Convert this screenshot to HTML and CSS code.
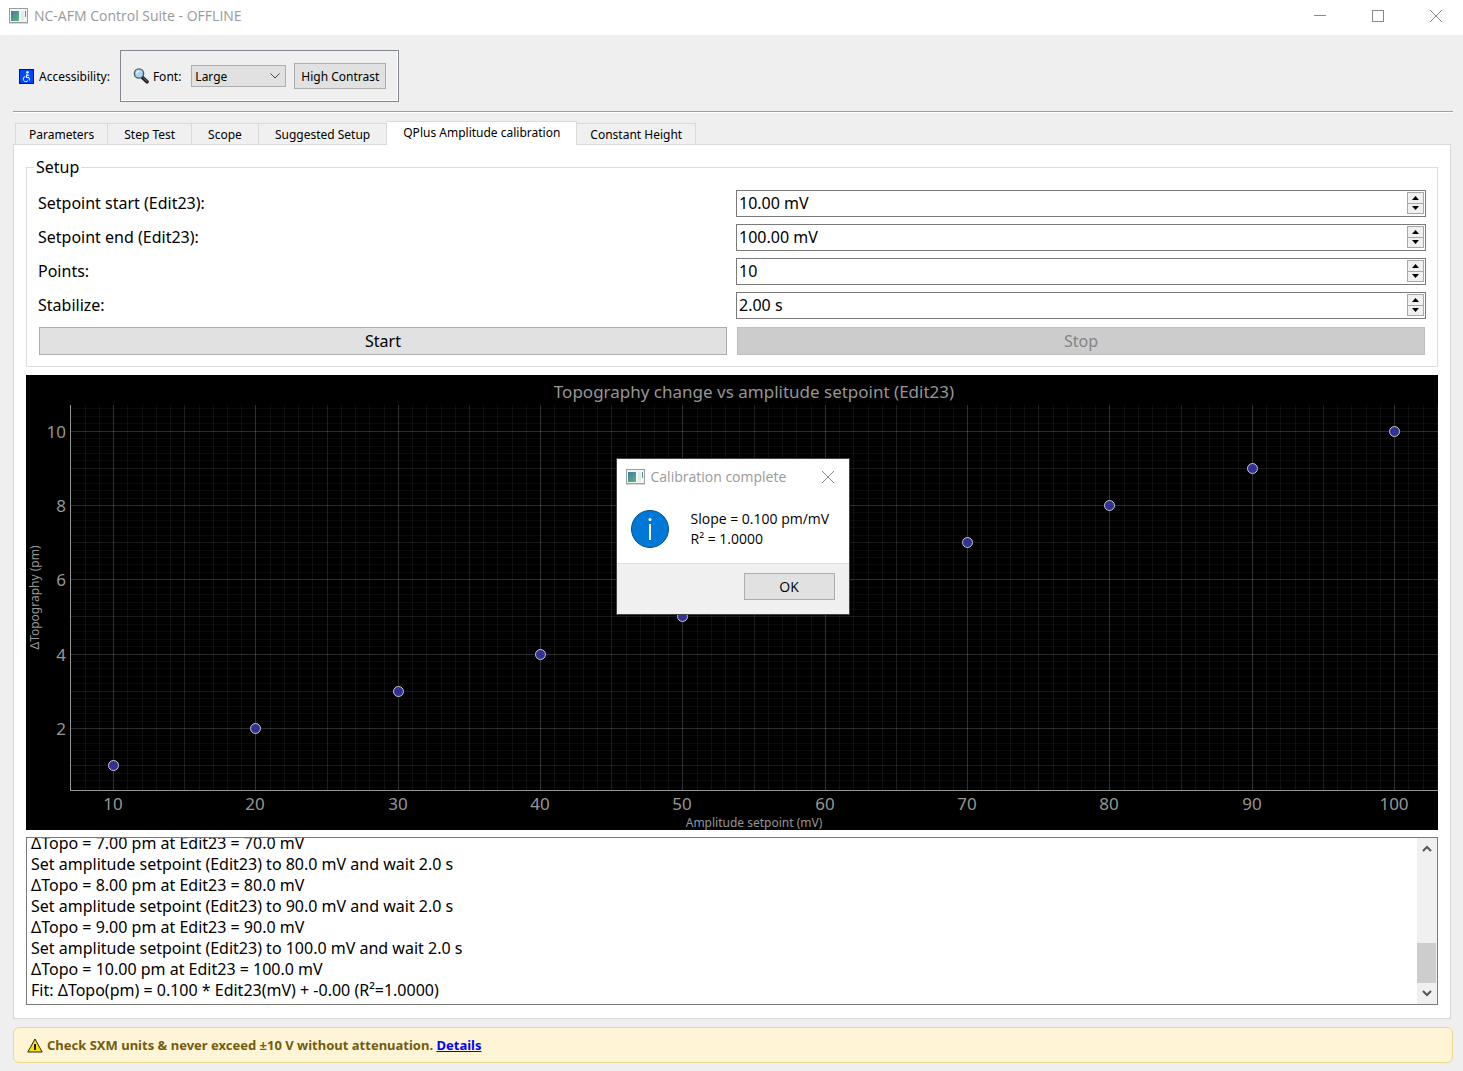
FILE: index.html
```html
<!DOCTYPE html>
<html lang="en">
<head>
<meta charset="utf-8">
<title>NC-AFM Control Suite - OFFLINE</title>
<link rel="stylesheet" href="styles.css">
</head>
<body>
<svg class="defs" aria-hidden="true">
  <defs>
    <linearGradient id="app-screen" x1="0" y1="0" x2="1" y2="1"><stop offset="0" stop-color="#4a78a0"/><stop offset="1" stop-color="#5cb487"/></linearGradient>
    <symbol id="app-icon" viewBox="0 0 19 16">
      <rect x="0.500" y="0.500" width="18" height="14" fill="#f4f6f6" stroke="#9a9fa2"/>
      <rect x="0" y="15" width="19" height="1" fill="#d8d8d8"/>
      <rect x="2" y="3" width="8" height="10" fill="url(#app-screen)"/>
      <rect x="12" y="3" width="3" height="10" fill="#e6eaeb"/>
      <rect x="16" y="3" width="1" height="6" fill="#4d9a8c"/>
    </symbol>
    <symbol id="close-icon" viewBox="0 0 14 14"><path d="M1 1 13 13M13 1 1 13" fill="none" stroke="#8a8a8a"/></symbol>
  </defs>
</svg>

<header class="titlebar">
  <svg class="app-icon" aria-hidden="true"><use href="#app-icon"/></svg>
  <h1 class="title">NC-AFM Control Suite - OFFLINE</h1>
  <div class="window-controls">
    <button class="window-button" type="button" aria-label="Minimize"><svg width="14" height="14"><path d="M1 6.500H13" stroke="#8a8a8a"/></svg></button>
    <button class="window-button" type="button" aria-label="Maximize"><svg width="14" height="14"><rect x="1.500" y="1.500" width="11" height="11" fill="none" stroke="#8a8a8a"/></svg></button>
    <button class="window-button" type="button" aria-label="Close"><svg width="14" height="14"><use href="#close-icon"/></svg></button>
  </div>
</header>

<main class="client">
  <div class="toolbar">
    <svg class="access-icon" viewBox="0 0 15 15" aria-hidden="true">
      <rect x="0.500" y="0.500" width="14" height="14" fill="#0046ff" stroke="#001a66"/>
      <circle cx="8.500" cy="3.200" r="1.200" fill="#fff"/>
      <path d="M8 4.500 7.300 8.500H10L10.500 11.500M7.800 6.300H10.300M6.300 7.500A2.600 2.600 0 1 0 9 11.500" fill="none" stroke="#fff"/>
    </svg>
    <span class="access-label">Accessibility:</span>
    <div class="access-frame">
      <svg class="lens-icon" viewBox="0 0 16 16" aria-hidden="true">
        <path d="M9.500 9.500 14 13.700" stroke="#111" stroke-width="3.600" stroke-linecap="round"/>
        <path d="M10.500 10 14 13.300" stroke="#555" stroke-width="1.600" stroke-linecap="round"/>
        <circle cx="6" cy="5.500" r="4.600" fill="#a9d5f0" stroke="#4c5964" stroke-width="1.400"/>
        <path d="M3.500 5.500Q4 3 6.500 2.800" fill="none" stroke="#e8f6ff" stroke-width="1.200"/>
      </svg>
      <label class="font-label" for="font-size">Font:</label>
      <span class="select-wrap">
        <select id="font-size" class="select"><option>Small</option><option>Medium</option><option selected>Large</option></select>
        <svg class="select-arrow" width="10" height="6" aria-hidden="true"><path d="M0.500 0.500 5 5 9.500 0.500" fill="none" stroke="#444"/></svg>
      </span>
      <button class="push-button contrast-button" type="button">High Contrast</button>
    </div>
  </div>

  <nav class="tabs" role="tablist">
    <button class="tab" role="tab" type="button">Parameters</button>
    <button class="tab" role="tab" type="button">Step Test</button>
    <button class="tab" role="tab" type="button">Scope</button>
    <button class="tab" role="tab" type="button">Suggested Setup</button>
    <button class="tab tab-active" role="tab" type="button" aria-selected="true">QPlus Amplitude calibration</button>
    <button class="tab" role="tab" type="button">Constant Height</button>
  </nav>

  <section class="pane">
    <fieldset class="setup">
      <legend class="setup-title">Setup</legend>
      <div class="form">
        <label class="form-label" for="start-value">Setpoint start (Edit23):</label>
        <div class="spin"><input class="spin-input" id="start-value" value="10.00 mV"><span class="spin-buttons"><button class="spin-button" type="button" aria-label="Increase"><svg width="7" height="4"><path d="M0 4 3.500 0 7 4Z"/></svg></button><button class="spin-button" type="button" aria-label="Decrease"><svg width="7" height="4"><path d="M0 0H7L3.500 4Z"/></svg></button></span></div>
        <label class="form-label" for="end-value">Setpoint end (Edit23):</label>
        <div class="spin"><input class="spin-input" id="end-value" value="100.00 mV"><span class="spin-buttons"><button class="spin-button" type="button" aria-label="Increase"><svg width="7" height="4"><path d="M0 4 3.500 0 7 4Z"/></svg></button><button class="spin-button" type="button" aria-label="Decrease"><svg width="7" height="4"><path d="M0 0H7L3.500 4Z"/></svg></button></span></div>
        <label class="form-label" for="points-value">Points:</label>
        <div class="spin"><input class="spin-input" id="points-value" value="10"><span class="spin-buttons"><button class="spin-button" type="button" aria-label="Increase"><svg width="7" height="4"><path d="M0 4 3.500 0 7 4Z"/></svg></button><button class="spin-button" type="button" aria-label="Decrease"><svg width="7" height="4"><path d="M0 0H7L3.500 4Z"/></svg></button></span></div>
        <label class="form-label" for="stabilize-value">Stabilize:</label>
        <div class="spin"><input class="spin-input" id="stabilize-value" value="2.00 s"><span class="spin-buttons"><button class="spin-button" type="button" aria-label="Increase"><svg width="7" height="4"><path d="M0 4 3.500 0 7 4Z"/></svg></button><button class="spin-button" type="button" aria-label="Decrease"><svg width="7" height="4"><path d="M0 0H7L3.500 4Z"/></svg></button></span></div>
        <button class="push-button run-button" type="button">Start</button>
        <button class="push-button run-button" type="button" disabled>Stop</button>
      </div>
    </fieldset>

    <figure class="chart">
      <svg class="plot" id="plot" role="img" aria-label="Topography change vs amplitude setpoint"></svg>
    </figure>

    <div class="log">
      <div class="log-text" role="log">
        <p class="log-line">ΔTopo = 7.00 pm at Edit23 = 70.0 mV</p>
        <p class="log-line">Set amplitude setpoint (Edit23) to 80.0 mV and wait 2.0 s</p>
        <p class="log-line">ΔTopo = 8.00 pm at Edit23 = 80.0 mV</p>
        <p class="log-line">Set amplitude setpoint (Edit23) to 90.0 mV and wait 2.0 s</p>
        <p class="log-line">ΔTopo = 9.00 pm at Edit23 = 90.0 mV</p>
        <p class="log-line">Set amplitude setpoint (Edit23) to 100.0 mV and wait 2.0 s</p>
        <p class="log-line">ΔTopo = 10.00 pm at Edit23 = 100.0 mV</p>
        <p class="log-line">Fit: ΔTopo(pm) = 0.100 * Edit23(mV) + -0.00 (R²=1.0000)</p>
      </div>
      <div class="scrollbar">
        <button class="scroll-button" type="button" aria-label="Scroll up"><svg width="10" height="7"><path d="M1 6 5 2 9 6" fill="none" stroke="#555" stroke-width="2"/></svg></button>
        <div class="scroll-track"><div class="scroll-thumb"></div></div>
        <button class="scroll-button" type="button" aria-label="Scroll down"><svg width="10" height="7"><path d="M1 1 5 5 9 1" fill="none" stroke="#555" stroke-width="2"/></svg></button>
      </div>
    </div>
  </section>

  <footer class="warning">
    <svg class="warning-icon" viewBox="0 0 16 15" aria-hidden="true"><path d="M8 1 15.200 14H0.800Z" fill="#ffe100" stroke="#222" stroke-linejoin="round"/><path d="M8 6V12" stroke="#222" stroke-width="2"/></svg>
    <span>Check SXM units &amp; never exceed ±10 V without attenuation. <a class="details" href="#details">Details</a></span>
  </footer>
</main>

<dialog class="message" open aria-labelledby="message-title">
  <div class="message-bar">
    <svg class="app-icon" aria-hidden="true"><use href="#app-icon"/></svg>
    <h2 class="title" id="message-title">Calibration complete</h2>
    <button class="message-close" type="button" aria-label="Close"><svg width="14" height="14"><use href="#close-icon"/></svg></button>
  </div>
  <div class="message-body">
    <svg class="info-icon" viewBox="0 0 38 38" aria-hidden="true"><circle cx="19" cy="19" r="18.500" fill="#0078d7" stroke="#00508f"/><path d="M19 14V30" stroke="#fff" stroke-width="2"/><circle cx="19" cy="9.500" r="1.500" fill="#fff"/></svg>
    <p class="message-text">Slope = 0.100 pm/mV<br>R² = 1.0000</p>
  </div>
  <div class="message-actions"><button class="push-button ok-button" type="button">OK</button></div>
</dialog>
<script src="plot.js"></script>
</body>
</html>
```
FILE: styles.css
```css
* { box-sizing: border-box; }
body {
  margin: 0;
  min-height: 100vh;
  display: flex;
  flex-direction: column;
  background: #efefef;
  color: #000;
  font-family: "Noto Sans", sans-serif;
  font-size: 12px;
}
button, input, select { font: inherit; color: inherit; margin: 0; }
.defs { position: absolute; width: 0; height: 0; }

.titlebar { display: flex; align-items: center; height: 35px; padding: 0 0 3px 9px; background: #fff; }
.app-icon { width: 19px; height: 16px; flex: none; }
.title { margin: 0 0 0 6px; font-family: "Open Sans", sans-serif; font-size: 15px; font-weight: 400; line-height: 20px; color: #999; white-space: nowrap; }
.titlebar .title { font-size: 14px; }
.window-controls { display: flex; margin-left: auto; margin-right: -2px; overflow: hidden; }
.window-button { display: grid; place-items: center; width: 58px; height: 32px; padding: 0; border: 0; background: none; }

.client { flex: 1; display: flex; flex-direction: column; padding: 15px 10px 8px 13px; }
.toolbar { display: flex; align-items: center; padding: 0 0 9px 6px; border-bottom: 1px solid #a0a0a0; box-shadow: 0 1px #fff; }
.access-icon { width: 15px; height: 15px; margin-right: 5px; }
.access-label { margin-right: 10px; }
.access-frame { display: flex; align-items: center; height: 52px; padding: 0 12px; border: 1px solid #828790; box-shadow: inset -1px -1px #fff; }
.lens-icon { width: 16px; height: 16px; margin-right: 4px; }
.font-label { margin-right: 10px; }
.select-wrap { position: relative; display: flex; margin-right: 8px; }
.select { width: 95px; height: 22px; padding: 0 3px; appearance: none; border: 1px solid #adadad; border-radius: 0; background: #e1e1e1; }
.select-arrow { position: absolute; right: 6px; top: 8px; pointer-events: none; }
.push-button { border: 1px solid #adadad; border-radius: 0; background: #e1e1e1; padding: 0; }
.contrast-button { height: 26px; padding: 0 6px; }

.tabs { display: flex; align-items: flex-end; height: 32px; padding-left: 2px; z-index: 1; }
.tab { height: 21px; padding: 0 16px; border: 1px solid #d9d9d9; border-width: 1px 1px 0 0; background: #f0f0f0; }
.tab:first-child { padding: 0 13px; border-left-width: 1px; }
.tab:last-child { padding: 0 13px; }
.tab-active { height: 24px; padding-bottom: 2px; margin-bottom: -1px; background: #fff; }

.pane { flex: 1; display: flex; flex-direction: column; margin-right: 2px; padding: 11px 12px 13px; border: 1px solid #d9d9d9; background: #fff; font-size: 16px; }
.setup { margin: 0; padding: 12px 11px 11px; border: 1px solid #dcdcdc; min-width: 0; }
.setup-title { margin-left: -4px; padding: 0 2px; line-height: 22px; }
.form { display: grid; grid-template-columns: 1fr 1fr; gap: 7px 8px; }
.form-label { line-height: 27px; }
.spin { display: flex; height: 27px; padding: 1px 1px 2px 0; border: 1px solid #7a7a7a; background: #fff; }
.spin-input { flex: 1; min-width: 0; padding: 0 2px; border: 0; outline: 0; background: none; }
.spin-buttons { display: flex; flex-direction: column; width: 17px; height: 22px; border: 1px solid #a8a8a8; }
.spin-button { flex: 1; display: grid; place-items: center; padding: 0; border: 0; background: #f0f0f0; }
.spin-button + .spin-button { border-top: 1px solid #a8a8a8; }
.run-button { height: 28px; margin: 1px; margin-bottom: 0; }
.run-button:disabled { background: #ccc; border-color: #bfbfbf; color: #838383; }

.chart { position: relative; flex: 1; min-height: 320px; margin: 8px 0 7px; background: #000; }
.plot { position: absolute; inset: 0; width: 100%; height: 100%; fill: #969696; }
.plot-title { font-size: 17px; text-anchor: middle; }
.tick-x { font-size: 17px; text-anchor: middle; }
.tick-y { font-size: 17px; text-anchor: end; }
.axis-label { font-size: 12px; text-anchor: middle; }
.grid-minor { fill: #fff; fill-opacity: 0.06; }
.grid-faint { fill: #fff; fill-opacity: 0.04; }
.grid-mid { fill: #fff; fill-opacity: 0.06; }
.grid-major { fill: #fff; fill-opacity: 0.09; }
.axis { fill: #969696; }
.point { fill: #323296; stroke: #c8c8c8; }

.log { display: flex; height: 168px; border: 1px solid #7a7a7a; background: #fff; }
.log-text { flex: 1; display: flex; flex-direction: column; justify-content: flex-end; overflow: hidden; padding: 0 4px 3px; }
.log-line { flex: none; margin: 0; line-height: 21px; }
.scrollbar { display: flex; flex-direction: column; width: 20px; padding-right: 1px; background: #f0f0f0; }
.scroll-button { display: grid; place-items: center; height: 21px; padding: 0; border: 0; background: none; }
.scroll-track { flex: 1; display: flex; align-items: flex-end; }
.scroll-thumb { width: 100%; height: 40px; background: #cdcdcd; }

.warning { display: flex; align-items: center; height: 36px; margin-top: 8px; padding: 0 13px; border: 1px solid #e8d890; border-radius: 6px; background: #fff5d6; color: #735c0f; font-size: 13px; font-weight: 700; }
.warning-icon { width: 16px; height: 15px; margin-right: 4px; }
.details { color: #00f; }

.message { position: fixed; inset: 2px 0 0 2px; margin: auto; width: 234px; height: fit-content; padding: 0; border: 1px solid #444; background: #fff; color: #000; font-family: "Open Sans", sans-serif; font-size: 14px; }
.message-bar { display: flex; align-items: center; height: 36px; padding: 0 14px 0 9px; }
.message-bar .title { font-size: 14px; }
.message-close { display: grid; margin-left: auto; padding: 0; border: 0; background: none; }
.message-body { display: flex; align-items: center; gap: 22px; height: 68px; padding: 0 0 0 14px; }
.info-icon { width: 38px; height: 38px; flex: none; }
.message-text { margin: 0; line-height: 20px; white-space: nowrap; }
.message-actions { display: flex; justify-content: flex-end; padding: 9px 14px 14px; border-top: 1px solid #dfdfdf; background: #f0f0f0; }
.ok-button { width: 91px; height: 27px; }
```
FILE: plot.js
```js
const samples = [[10, 1], [20, 2], [30, 3], [40, 4], [50, 5], [60, 6], [70, 7], [80, 8], [90, 9], [100, 10]];
const xRange = [6.97, 103.08];
const yRange = [0.33, 10.69];
const margin = { left: 44, top: 30, bottom: 40 };
const plot = document.getElementById("plot");

function drawPlot() {
  const width = plot.clientWidth;
  const height = plot.clientHeight;
  const bottom = height - margin.bottom;
  const x = v => Math.round(margin.left + (v - xRange[0]) / (xRange[1] - xRange[0]) * (width - margin.left));
  const y = v => Math.round(bottom - (v - yRange[0]) / (yRange[1] - yRange[0]) * (bottom - margin.top));
  const parts = [];
  const vertical = (v, cls) => parts.push(`<rect class="${cls}" x="${x(v)}" y="${margin.top}" width="1" height="${bottom - margin.top}"/>`);
  const horizontal = (v, cls) => parts.push(`<rect class="${cls}" x="${margin.left}" y="${y(v)}" width="${width - margin.left}" height="1"/>`);

  for (let v = 8; v <= 103; v++) {
    vertical(v, "grid-minor");
    if (v % 5 === 0) vertical(v, "grid-mid");
    if (v % 10 === 0) vertical(v, "grid-major");
  }
  for (let i = 2; i <= 53; i++) {
    horizontal(i / 5, "grid-faint");
    if (i % 5 === 0) horizontal(i / 5, "grid-mid");
    if (i % 10 === 0) horizontal(i / 5, "grid-major");
  }
  parts.push(`<rect class="axis" x="${margin.left}" y="${margin.top}" width="1" height="${bottom - margin.top}"/>`);
  parts.push(`<rect class="axis" x="${margin.left}" y="${bottom}" width="${width - margin.left}" height="1"/>`);
  for (const [px, py] of samples) {
    parts.push(`<circle class="point" cx="${x(px) + 0.5}" cy="${y(py) + 0.5}" r="5"/>`);
    parts.push(`<text class="tick-x" x="${x(px)}" y="${bottom + 20}">${px}</text>`);
  }
  for (let v = 2; v <= 10; v += 2) {
    parts.push(`<text class="tick-y" x="${margin.left - 4}" y="${y(v) + 7}">${v}</text>`);
  }
  const middle = (margin.left + width) / 2;
  parts.push(`<text class="plot-title" x="${middle}" y="23">Topography change vs amplitude setpoint (Edit23)</text>`);
  parts.push(`<text class="axis-label" x="${middle}" y="${height - 3}">Amplitude setpoint (mV)</text>`);
  parts.push(`<text class="axis-label" transform="translate(13 ${(margin.top + bottom) / 2}) rotate(-90)">ΔTopography (pm)</text>`);
  plot.innerHTML = parts.join("");
}

drawPlot();
window.addEventListener("resize", drawPlot);
```
